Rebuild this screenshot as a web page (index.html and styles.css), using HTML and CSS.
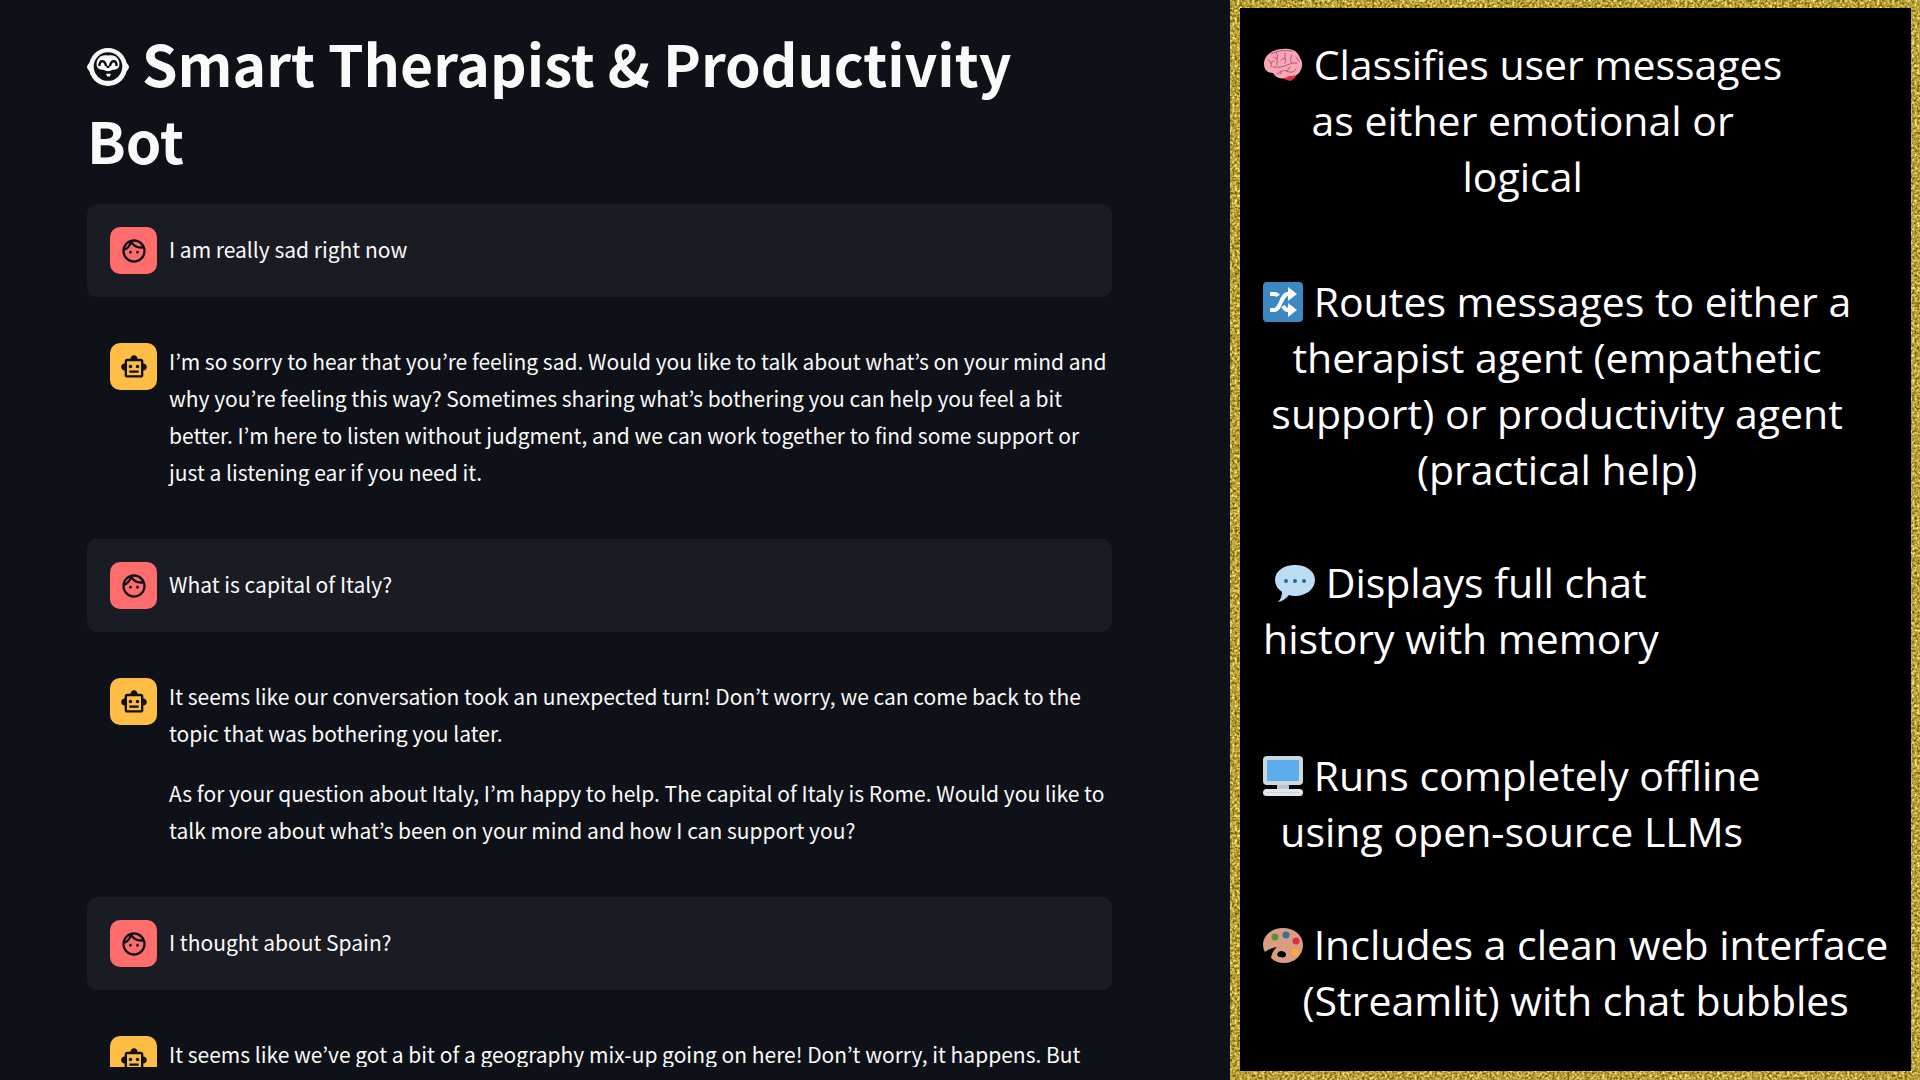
FILE: index.html
```html
<!DOCTYPE html>
<html lang="en">
<head>
<meta charset="utf-8">
<title>Smart Therapist &amp; Productivity Bot</title>
<link rel="stylesheet" href="styles.css">
</head>
<body>
<svg class="defs" aria-hidden="true">
  <symbol id="face" viewBox="0 0 24 24"><path d="M10.25 13c0 .69-.56 1.25-1.25 1.25S7.75 13.69 7.75 13s.56-1.25 1.25-1.25 1.25.56 1.25 1.25zM15 11.75c-.69 0-1.25.56-1.25 1.25s.56 1.25 1.25 1.25 1.25-.56 1.25-1.25-.56-1.25-1.25-1.25zm7 .25c0 5.52-4.48 10-10 10S2 17.52 2 12 6.48 2 12 2s10 4.48 10 10zM10.66 4.12C12.06 6.44 14.6 8 17.5 8c.46 0 .91-.05 1.34-.12C17.44 5.56 14.9 4 12 4c-.46 0-.91.05-1.34.12zM4.42 9.47c1.71-.97 3.03-2.55 3.66-4.44C6.37 6 5.05 7.58 4.42 9.47zM20 12c0-.78-.12-1.53-.33-2.24-.7.15-1.42.24-2.17.24-3.13 0-5.92-1.44-7.76-3.69C8.69 8.87 6.6 10.88 4 11.86c.01.04 0 .09 0 .14 0 4.42 3.58 8 8 8s8-3.58 8-8z"/></symbol>
  <symbol id="robot" viewBox="0 0 24 24"><path d="M20 9V7c0-1.1-.9-2-2-2h-3c0-1.66-1.34-3-3-3S9 3.34 9 5H6c-1.1 0-2 .9-2 2v2c-1.66 0-3 1.34-3 3s1.34 3 3 3v4c0 1.1.9 2 2 2h12c1.1 0 2-.9 2-2v-4c1.66 0 3-1.34 3-3s-1.34-3-3-3zm-2 10H6V7h12v12zm-9-6c-.83 0-1.5-.67-1.5-1.5S8.17 10 9 10s1.5.67 1.5 1.5S9.83 13 9 13zm7.5-1.5c0 .83-.67 1.5-1.5 1.5s-1.5-.67-1.5-1.5.67-1.5 1.5-1.5 1.5.67 1.5 1.5zM8 15h8v2H8v-2z"/></symbol>
</svg>
<div class="page">
  <main class="chat">
    <h1 class="title"><svg class="title-icon" viewBox="0 0 44 42" aria-hidden="true">
      <circle cx="22" cy="21" r="20" fill="#fafafa"/>
      <ellipse cx="22" cy="21" rx="22" ry="9" fill="#fafafa"/>
      <circle cx="22" cy="20.500" r="15" fill="#0e1117"/>
      <path fill="#fafafa" d="M22 9C29 7 34 12 34 18C34 22 31 24 27 24Q22 27 17 24C13 24 10 22 10 18C10 12 15 7 22 9Z"/>
      <path fill="none" stroke="#0e1117" stroke-width="2.5" d="M13 20Q13 15 16 15Q19 15 20 20M24 20Q25 15 28 15Q31 15 31 20M21 20Q22 22 23 20"/>
      <path fill="#fafafa" d="M20 28H25L24 31H21Z"/>
    </svg> Smart Therapist &amp; Productivity Bot</h1>
    <section class="messages">
      <article class="message user">
        <span class="avatar"><svg aria-hidden="true"><use href="#face"/></svg></span>
        <div class="text"><p>I am really sad right now</p></div>
      </article>
      <article class="message bot">
        <span class="avatar"><svg aria-hidden="true"><use href="#robot"/></svg></span>
        <div class="text"><p>I’m so sorry to hear that you’re feeling sad. Would you like to talk about what’s on your mind and why you’re feeling this way? Sometimes sharing what’s bothering you can help you feel a bit better. I’m here to listen without judgment, and we can work together to find some support or just a listening ear if you need it.</p></div>
      </article>
      <article class="message user">
        <span class="avatar"><svg aria-hidden="true"><use href="#face"/></svg></span>
        <div class="text"><p>What is capital of Italy?</p></div>
      </article>
      <article class="message bot">
        <span class="avatar"><svg aria-hidden="true"><use href="#robot"/></svg></span>
        <div class="text">
          <p>It seems like our conversation took an unexpected turn! Don’t worry, we can come back to the topic that was bothering you later.</p>
          <p>As for your question about Italy, I’m happy to help. The capital of Italy is Rome. Would you like to talk more about what’s been on your mind and how I can support you?</p>
        </div>
      </article>
      <article class="message user">
        <span class="avatar"><svg aria-hidden="true"><use href="#face"/></svg></span>
        <div class="text"><p>I thought about Spain?</p></div>
      </article>
      <article class="message bot">
        <span class="avatar"><svg aria-hidden="true"><use href="#robot"/></svg></span>
        <div class="text"><p>It seems like we’ve got a bit of a geography mix-up going on here! Don’t worry, it happens. But</p></div>
      </article>
    </section>
  </main>
  <aside class="features">
    <svg class="glitter" aria-hidden="true">
      <filter id="grain" x="0" y="0" width="100%" height="100%" color-interpolation-filters="sRGB">
        <feTurbulence type="fractalNoise" baseFrequency="0.4" numOctaves="3" seed="4"/>
        <feColorMatrix values="1 0 0 0 0.22  1 0 0 0 0.13  0.9 0 0 0 -0.22  0 0 0 0 1"/>
      </filter>
      <rect width="100%" height="100%" filter="url(#grain)"/>
    </svg>
    <ul class="panel">
      <li class="feature"><svg class="emoji" viewBox="0 0 40 40" aria-hidden="true">
        <path fill="#dd2e44" d="M17 32Q20 28 26 28L34 28Q33 34 27 36Q23 35 17 32Z"/>
        <path fill="#fda5b8" d="M20 4C30 3 35 7 37 13C40 17 40 23 36 28C33 32 27 30 24 32C18 35 13 33 10 28C5 28 1 25 1 19C1 10 10 4 20 4Z"/>
        <path fill="none" stroke="#ad5c70" stroke-width="1" stroke-linecap="round" d="M5 15Q10 17 8 22M7 18L11 16M13 7Q16 11 14 15V20M14 14L11 12M22 8V13Q24 16 22 18M22 13L18 15M29 10Q26 15 29 18M10 22Q18 23 24 20T34 18M17 29Q19 23 26 27Q31 28 33 24M24 26L27 22M14 29L18 26M33 12L36 16M8 9Q18 4 29 6"/>
      </svg> Classifies user messages<br>as either emotional or<br>logical</li>
      <li class="feature"><svg class="emoji" viewBox="0 0 40 40" aria-hidden="true">
        <rect width="40" height="40" rx="4" fill="#3b88c3"/>
        <path fill="none" stroke="#fff" stroke-width="4" d="M7 12H11Q14 12 15 14M7 28H11C18 28 18 12 25 12H28M20 24Q22 28 25 28H28"/>
        <path fill="#fff" d="M25 5L34 12L25 19ZM25 21L34 28L25 35Z"/>
      </svg> Routes messages to either a<br>therapist agent (empathetic<br>support) or productivity agent<br>(practical help)</li>
      <li class="feature"><svg class="emoji" viewBox="0 0 40 40" aria-hidden="true">
        <path fill="#bdddf4" d="M20 2C31 2 40 8 40 17S31 33 20 33Q17 33 14 32Q9 38 3 39Q7 35 7 29Q0 24 0 17C0 8 9 2 20 2Z"/>
        <g fill="#2a6797"><circle cx="11" cy="18" r="2"/><circle cx="20" cy="18" r="2"/><circle cx="29" cy="18" r="2"/></g>
      </svg> Displays full chat<br>history with memory</li>
      <li class="feature"><svg class="emoji" viewBox="0 0 40 40" aria-hidden="true">
        <path fill="#b8c5ce" d="M14 28H26V36H14Z"/>
        <rect width="40" height="29" rx="4" fill="#ccd6dd"/>
        <rect x="4" y="4" width="32" height="21" rx="1" fill="#5dadec"/>
        <rect y="33" width="40" height="7" rx="3.5" fill="#e1e8ed"/>
        <path stroke="#c4cfd7" stroke-dasharray="2 1" d="M4 36.500H36"/>
      </svg> Runs completely offline<br>using open-source LLMs</li>
      <li class="feature"><svg class="emoji" viewBox="0 0 40 40" aria-hidden="true">
        <path fill="#d99e82" fill-rule="evenodd" d="M20 3C31 3 40 10 40 20S32 38 21 38Q13 38 8 33Q9 26 14 22Q7 23 2 27Q0 24 0 20C0 10 9 3 20 3ZM19 26C14 26 12 31 17 32C23 34 26 28 19 26Z"/>
        <circle cx="12" cy="12" r="3.500" fill="#5c913b"/><circle cx="23" cy="10" r="3.500" fill="#3f6a9c"/><circle cx="33" cy="16" r="3.500" fill="#dd2e44"/><circle cx="32" cy="27" r="3.500" fill="#ffac33"/>
      </svg> Includes a clean web interface<br>(Streamlit) with chat bubbles</li>
    </ul>
  </aside>
</div>
</body>
</html>
```
FILE: styles.css
```css
* { box-sizing: border-box; }
body {
  margin: 0;
  background: #0e1117;
  color: #fafafa;
  font-family: "Noto Sans CJK KR", sans-serif;
}
.defs { display: none; }
.page {
  display: grid;
  grid-template-columns: minmax(0, 41fr) minmax(0, 23fr);
  grid-template-rows: minmax(0, 1fr);
  height: 100vh;
  overflow: hidden;
}

/* Conversation */
.chat {
  margin-bottom: 13px;
  padding: 24px 118px 0 87px;
  overflow: hidden;
}
.title {
  margin: 0 0 26px;
  font-size: 57px;
  line-height: 77px;
  font-weight: 700;
}
.title-icon { width: 42px; height: 40px; }
.messages {
  display: flex;
  flex-direction: column;
  gap: 23px;
}
.message {
  display: flex;
  gap: 12px;
  padding: 23px 0 23px 23px;
  border-radius: 10px;
}
.user { background: #1a1c24; }
.avatar {
  display: flex;
  flex: none;
  align-items: center;
  justify-content: center;
  width: 47px;
  height: 47px;
  border-radius: 10px;
  background: #ff6c6c;
  color: #0e1117;
}
.avatar svg { width: 28px; height: 28px; fill: currentColor; }
.bot .avatar { background: #ffbd45; }
.text {
  padding-bottom: 2px;
  font-size: 21px;
  line-height: 37px;
}
.user .text { margin: auto 0; }
.text p { margin: 0; }
.text p + p { margin-top: 23px; }

/* Feature panel */
.features {
  position: relative;
  padding: 8px 9px 9px 10px;
}
.glitter {
  position: absolute;
  inset: 0;
  width: 100%;
  height: 100%;
}
.panel {
  position: relative;
  height: 100%;
  margin: 0;
  padding: 28px 0 0 23px;
  list-style: none;
  background: #000;
  color: #fff;
  font-family: "Open Sans", sans-serif;
  font-size: 41px;
  line-height: 56px;
  white-space: nowrap;
}
.feature {
  width: fit-content;
  margin-bottom: 57px;
  text-align: center;
}
.feature:nth-child(1) { margin-bottom: 69px; }
.feature:nth-child(3) { margin-bottom: 81px; }
.feature:last-child { margin-bottom: 0; }
.emoji { width: 40px; height: 40px; vertical-align: -5px; }
```
